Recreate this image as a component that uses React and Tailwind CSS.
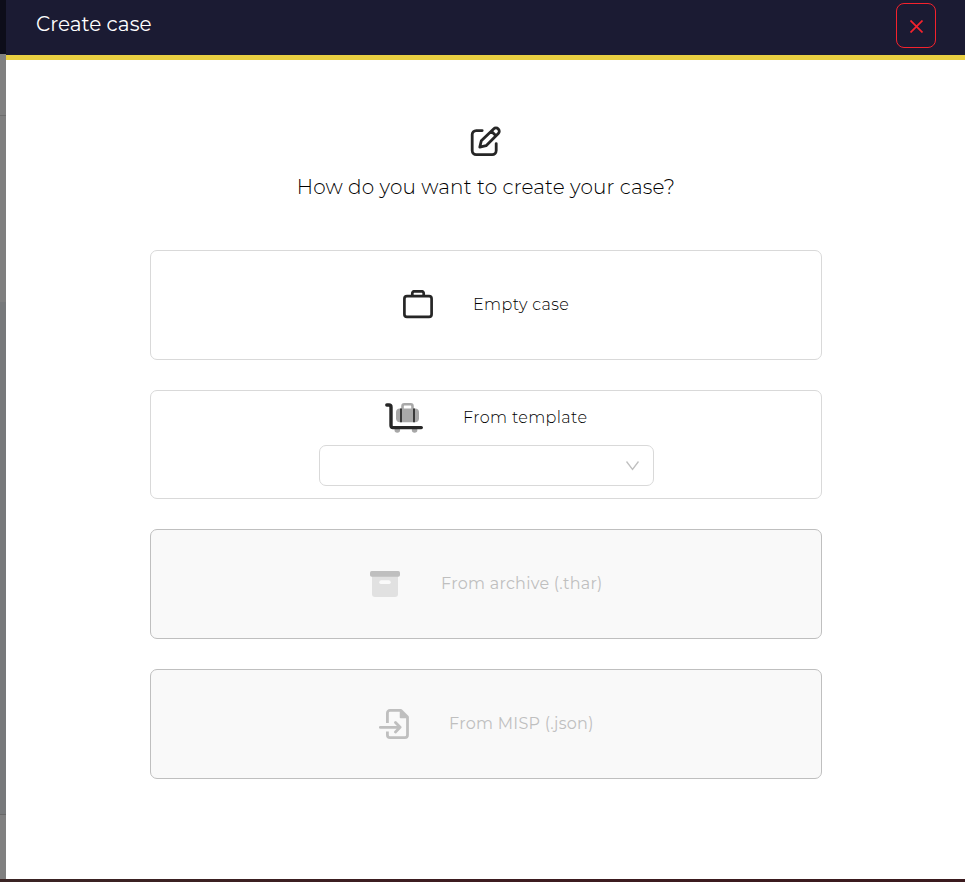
import React from "react";

function EditIcon() {
  return (
    <svg className="block h-8 w-8" viewBox="0 0 32 32" fill="none" stroke="#262626" strokeWidth="2.8" strokeLinecap="round" strokeLinejoin="round">
      <path d="M13 5.6H7a4 4 0 0 0-4 4v16a4 4 0 0 0 4 4h16a4 4 0 0 0 4-4v-7" transform="translate(-.8 0)" />
      <path d="M9.8 22.1l1.5-6.3L23.6 3.9a3.3 3.3 0 0 1 4.7 4.7L16.1 20.7zM21.4 6.3l4.5 4.5" />
    </svg>
  );
}

function BriefcaseIcon() {
  return (
    <svg className="block h-[30px] w-[30px]" viewBox="0 0 30 30" fill="none" stroke="#262626" strokeWidth="2.7" strokeLinejoin="round">
      <rect x="1.4" y="6.2" width="27.2" height="20.6" rx="2.6" />
      <path d="M9.3 6V3.2a1.9 1.9 0 0 1 1.9-1.9h7.6a1.9 1.9 0 0 1 1.9 1.9V6" />
    </svg>
  );
}

function LuggageCartIcon() {
  return (
    <svg className="block h-[30px] w-[38px]" viewBox="0 0 38 30" fill="none">
      <rect x="11" y="5.5" width="23" height="13.8" rx="4" fill="#a8a8a8" />
      <path d="M17.5 6V3a1.7 1.7 0 0 1 1.7-1.7h6.6A1.7 1.7 0 0 1 27.5 3v3" stroke="#a8a8a8" strokeWidth="2.6" />
      <path d="M16 5.5v13.8M29 5.5v13.8" stroke="#262626" strokeWidth="1.7" />
      <circle cx="12.3" cy="27" r="2.8" fill="#a8a8a8" />
      <circle cx="29.6" cy="27" r="2.8" fill="#a8a8a8" />
      <path d="M1.8 2H4a2 2 0 0 1 2 2v18.6a2 2 0 0 0 2 2h28.3" stroke="#262626" strokeWidth="3.4" strokeLinecap="round" />
    </svg>
  );
}

function ArchiveIcon() {
  return (
    <svg className="block h-[26px] w-[30px]" viewBox="0 0 30 26">
      <path d="M2 5h26v18a3 3 0 0 1-3 3H5a3 3 0 0 1-3-3z" fill="#e1e1e1" />
      <rect width="30" height="5.7" rx="1.7" fill="#bfbfbf" />
      <rect x="9.3" y="9.3" width="11.4" height="3.8" rx="1.9" fill="#fafafa" />
    </svg>
  );
}

function ImportIcon() {
  return (
    <svg className="block h-[30px] w-[30px]" viewBox="0 0 30 30" fill="none" stroke="#bfbfbf" strokeWidth="2.8" strokeLinecap="round" strokeLinejoin="round">
      <path d="M8.4 14V4A2.6 2.6 0 0 1 11 1.4H22l6.5 6.5V26a2.6 2.6 0 0 1-2.6 2.6H11A2.6 2.6 0 0 1 8.4 26v-3.5" strokeLinecap="butt" />
      <path d="M21.5 2v6.5H28z" fill="#bfbfbf" strokeWidth="1.5" />
      <path d="M1.3 18.3H20.5M16.5 13.6l4.6 4.7-4.6 4.7" strokeWidth="2.8" />
    </svg>
  );
}

const labelStyle = "whitespace-nowrap text-base leading-6";

export default function App() {
  return (
    <div className="flex h-[882px] w-[965px] flex-col overflow-hidden bg-white font-['Montserrat','Inter',sans-serif] text-[#262626]">
      <div className="flex h-[879px]">
        <div className="flex w-1.5 shrink-0 flex-col">
          <div className="h-[54px] bg-[#0d0d19]" />
          <div className="h-[62px] border-b border-[#6d6d6d] bg-[#808080]" />
          <div className="h-[186px] bg-[#7f7f7f]" />
          <div className="h-[513px] border-b border-[#686868] bg-[#77797b]" />
          <div className="flex-1 bg-[#808080]" />
        </div>

        <section className="flex w-[959px] flex-col">
          <header className="flex h-[60px] shrink-0 justify-between border-b-[5px] border-[#e9cf42] bg-[#1b1b33] pr-[29px] pl-[30px]">
            <h1 className="mt-2 h-8 text-xl leading-8 font-normal text-white">Create case</h1>
            <button aria-label="Close" className="mt-[3px] flex h-[45px] w-10 items-center justify-center rounded-[8px] border border-[#f5222d]">
              <svg className="mt-[2px] h-[13px] w-[13px]" viewBox="0 0 13 13" fill="none" stroke="#f5222d" strokeWidth="1.7">
                <path d="M.5.5l12 12M12.5.5l-12 12" />
              </svg>
            </button>
          </header>

          <main className="flex flex-col items-center pt-[65px] pl-px">
            <EditIcon />
            <h2 className="mt-[14px] h-8 text-xl leading-8 font-light whitespace-nowrap tracking-[0.13px] text-black">
              How do you want to create your case?
            </h2>

            <div className="mt-[47px] flex w-[672px] flex-col gap-[30px]">
              <div className="flex h-[110px] items-center justify-center gap-[40px] rounded-[7px] border border-[#d9d9d9]">
                <BriefcaseIcon />
                <span className={`${labelStyle} w-[96px] font-light tracking-[0.38px] text-black`}>Empty case</span>
              </div>

              <div className="flex h-[109px] flex-col items-center rounded-[7px] border border-[#d9d9d9] pt-3">
                <div className="flex h-[30px] items-center gap-[40px]">
                  <LuggageCartIcon />
                  <span className={`${labelStyle} w-[124px] font-light tracking-[0.36px] text-black`}>From template</span>
                </div>
                <button aria-label="Template" className="mt-3 flex h-[41px] w-[335px] items-center justify-end rounded-[7px] border border-[#d9d9d9] pr-[14px]">
                  <svg className="h-[10px] w-[13px]" viewBox="0 0 13 10" fill="none" stroke="#bfbfbf" strokeWidth="1.3">
                    <path d="M.5.5l6 8 6-8" />
                  </svg>
                </button>
              </div>

              <div className="flex h-[110px] items-center justify-center gap-[41px] rounded-[7px] border border-[#bfbfbf] bg-[#f9f9f9] text-[#bfbfbf]">
                <ArchiveIcon />
                <span className={`${labelStyle} w-[161px] font-normal tracking-[0.27px]`}>From archive (.thar)</span>
              </div>

              <div className="flex h-[110px] items-center justify-center gap-[40px] rounded-[7px] border border-[#bfbfbf] bg-[#f9f9f9] text-[#bfbfbf]">
                <ImportIcon />
                <span className={`${labelStyle} w-[144px] font-normal tracking-[0.27px]`}>From MISP (.json)</span>
              </div>
            </div>
          </main>
        </section>
      </div>
      <div className="h-[3px] bg-gradient-to-r from-[#3a2424] via-[#3d1c20] to-[#3a1a1e]" />
    </div>
  );
}
